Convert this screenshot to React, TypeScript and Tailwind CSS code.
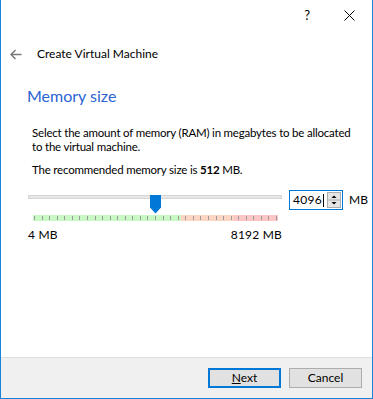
const TICKS = Array.from({ length: 33 })

export default function App() {
  return (
    <div className="flex h-[399px] w-[373px] flex-col border-x border-b border-[#1883d7] bg-white font-['Lato',sans-serif] text-[12px] text-black">
      {/* Title bar */}
      <div className="flex h-[31px] shrink-0 items-center justify-end gap-[34px] pr-[17px]">
        <span className="text-[13px] leading-none">?</span>
        <svg width="11" height="11" viewBox="0 0 11 11">
          <path d="M0.5 0.5 L10.5 10.5 M10.5 0.5 L0.5 10.5" stroke="#000" strokeWidth="1" />
        </svg>
      </div>

      {/* Wizard header */}
      <div className="mt-[15px] flex h-[16px] items-center pl-[9px]">
        <svg width="12" height="11" viewBox="0 0 12 11">
          <path d="M11.5 5.5 H1 M5.5 1 L1 5.5 L5.5 10" stroke="#7a7a7a" strokeWidth="1.5" fill="none" />
        </svg>
        <span className="ml-[15px] leading-[16px]">Create Virtual Machine</span>
      </div>

      <h1 className="mt-[24px] pl-[26px] text-[16px] leading-[20px] text-[#2b63d3]">Memory size</h1>

      <p className="mt-[20px] whitespace-nowrap pl-[31px] text-[11.5px] leading-[14px] tracking-[-0.2px]">
        Select the amount of memory (RAM) in megabytes to be allocated
        <br />
        to the virtual machine.
      </p>
      <p className="mt-[9px] pl-[31px] text-[11.5px] leading-[14px] tracking-[-0.2px]">
        The recommended memory size is <b>512</b> MB.
      </p>

      {/* Slider + spinbox */}
      <div className="mt-[10px] flex items-start pl-[27px]">
        <div className="w-[254px]">
          <div className="relative h-[20px]">
            <div className="mt-[8px] h-[4px] border border-[#d6d6d6] bg-[#e7e7e7]" />
            <svg className="absolute left-[122px] top-0" width="11" height="19" viewBox="0 0 11 19">
              <path d="M0 0 H11 V12.5 L5.5 18.5 L0 12.5 Z" fill="#0078d7" />
            </svg>
          </div>
          <div className="relative ml-[5px] flex h-[6px] w-[245px]">
            <div className="w-[148px] bg-[#c8f8c4]" />
            <div className="w-[53px] bg-[#fdd6c3]" />
            <div className="flex-1 bg-[#fdc6c6]" />
            <div className="absolute inset-x-px top-px flex justify-between">
              {TICKS.map((_, i) => (
                <span key={i} className="h-[4px] w-px bg-[#9a9a9a]" />
              ))}
            </div>
          </div>
          <div className="mt-[6px] flex justify-between leading-[16px] tracking-[0.2px]">
            <span>4 MB</span>
            <span>8192 MB</span>
          </div>
        </div>

        <div className="ml-[7px] mt-[3px] flex h-[20px] w-[54px] items-center border border-[#0078d7]">
          <span className="pl-[3px] leading-[16px] tracking-[0.3px]">4096</span>
          <span className="ml-px h-[13px] w-px bg-black" />
          <svg className="ml-auto mr-px" width="14" height="16" viewBox="0 0 14 16">
            <rect x="0.5" y="0.5" width="13" height="15" fill="#e5e5e5" stroke="#adadad" />
            <path d="M1 8 H13" stroke="#adadad" />
            <path d="M4.5 6 L7 3.5 L9.5 6 Z" fill="#000" />
            <path d="M4.5 10 L7 12.5 L9.5 10 Z" fill="#000" />
          </svg>
        </div>
        <span className="ml-[6px] mt-[3px] flex h-[20px] items-center">MB</span>
      </div>

      {/* Button bar */}
      <div className="mt-auto flex h-[41px] shrink-0 justify-end gap-[8px] border-t border-[#dfdfdf] bg-[#f0f0f0] pr-[10px] pt-[10px]">
        <button className="flex h-[20px] w-[73px] items-center justify-center border-2 border-[#0078d7] bg-[#e1e1e1] leading-none">
          <span>
            <span className="underline">N</span>ext
          </span>
        </button>
        <button className="flex h-[20px] w-[73px] items-center justify-center border border-[#adadad] bg-[#e1e1e1] leading-none">
          Cancel
        </button>
      </div>
    </div>
  )
}
